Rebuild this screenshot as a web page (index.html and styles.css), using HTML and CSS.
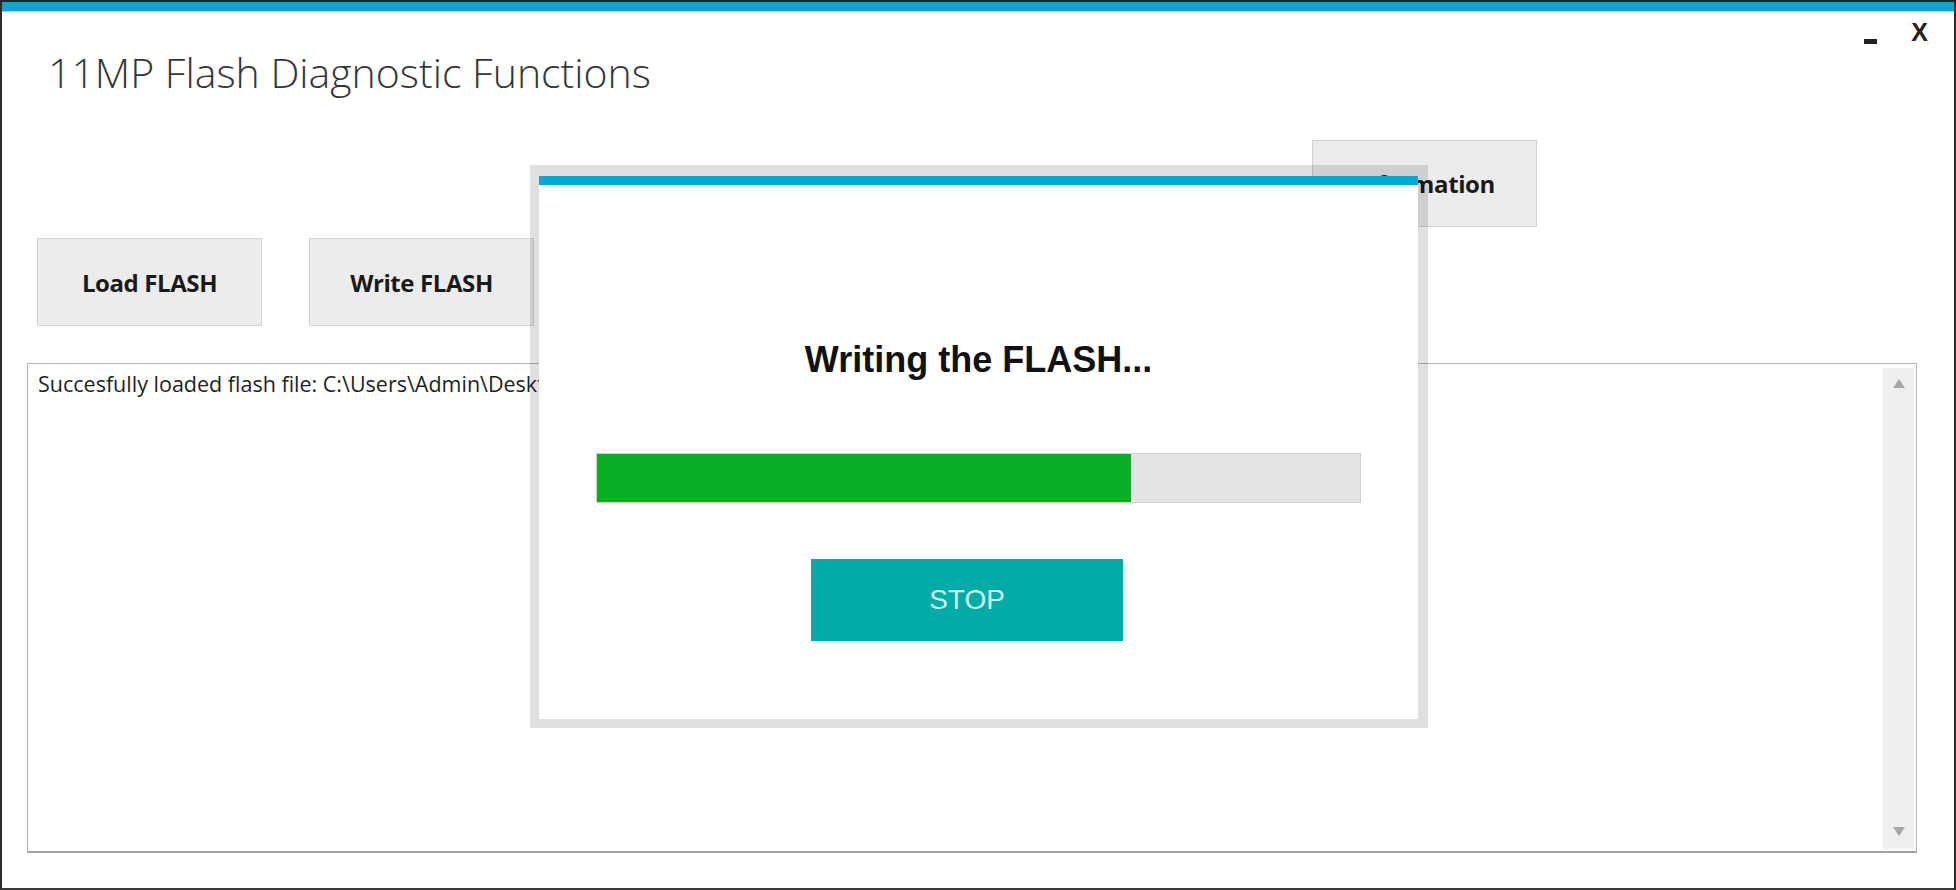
FILE: index.html
```html
<!DOCTYPE html>
<html lang="en">
<head>
    <meta charset="UTF-8">
    <meta name="viewport" content="width=device-width, initial-scale=1.0">
    <title>11MP Flash Diagnostic Functions</title>
    <link rel="stylesheet" href="styles.css">
</head>
<body>
    <div class="window">
        <div class="title-strip"></div>

        <header class="head">
            <h1 class="app-title">11MP Flash Diagnostic Functions</h1>
            <div class="window-controls">
                <span class="ctrl-min" title="Minimize"></span>
                <span class="ctrl-close" title="Close">X</span>
            </div>
        </header>

        <div class="toolbar toolbar-top">
            <button class="btn btn-info">Information</button>
        </div>

        <div class="toolbar">
            <button class="btn">Load FLASH</button>
            <button class="btn">Write FLASH</button>
        </div>

        <div class="log">
            <div class="log-text">Succesfully loaded flash file: C:\Users\Admin\Desktop\11MP_flash.bin</div>
            <div class="scrollbar">
                <span class="arrow-up"></span>
                <span class="arrow-down"></span>
            </div>
        </div>

        <!-- progress dialog sits over the main window -->
        <div class="dialog">
            <div class="dialog-body">
                <div class="dialog-title">Writing the FLASH...</div>
                <div class="progress">
                    <div class="progress-fill" style="width: 70%;"></div>
                </div>
                <button class="btn-stop">STOP</button>
            </div>
        </div>
    </div>
</body>
</html>
```

FILE: styles.css
```css
html, body {
    margin: 0;
    padding: 0;
    background-color: #1b2733;
}

body {
    font-family: "Open Sans", "Noto Sans", sans-serif;
    color: #1a1a1a;
}

.window {
    position: relative;
    width: 1956px;
    height: 890px;
    box-sizing: border-box;
    background-color: #ffffff;
    border-left: 2px solid #2a2a2a;
    border-right: 2px solid #2a2a2a;
    border-bottom: 2px solid #3a3a3a;
    border-top: 2px solid #1b2733;
    display: flex;
    flex-direction: column;
    overflow: hidden;
}

.title-strip {
    height: 9px;
    background-color: #0aa7d1;
    border-bottom: 1px solid #9fdcef;
}

.head {
    display: flex;
    justify-content: space-between;
    align-items: flex-start;
}

.app-title {
    margin: 40px 0 0 46px;
    font-size: 41px;
    font-weight: 300;
    line-height: 40px;
    color: #363636;
}

.window-controls {
    display: flex;
    align-items: flex-end;
    gap: 34px;
    margin: 8px 26px 0 0;
    font-family: "Liberation Sans", Arial, sans-serif;
}

.ctrl-min {
    width: 13px;
    height: 5px;
    margin-bottom: 1px;
    background-color: #222222;
}

.ctrl-close {
    font-size: 25px;
    font-weight: bold;
    line-height: 25px;
    color: #222222;
}

.toolbar {
    display: flex;
    gap: 47px;
    margin: 11px 0 0 35px;
}

.toolbar-top {
    margin: 48px 0 0 1310px;
}

.btn {
    width: 225px;
    height: 88px;
    box-sizing: border-box;
    background-color: #ececec;
    border: 1px solid #d3d3d3;
    font-family: "Open Sans", "Noto Sans", sans-serif;
    font-size: 24px;
    font-weight: bold;
    letter-spacing: -0.4px;
    color: #1a1a1a;
    padding: 0;
}

.btn-info {
    height: 87px;
}

.log {
    display: flex;
    width: 1890px;
    height: 490px;
    box-sizing: border-box;
    margin: 37px 0 0 25px;
    border: 1px solid #b6b6b6;
    border-bottom: 2px solid #a3a3a3;
}

.log-text {
    flex: 1;
    padding: 6px 0 0 10px;
    font-size: 21.5px;
    line-height: 28px;
    color: #1f1f1f;
    white-space: nowrap;
}

.scrollbar {
    width: 31px;
    margin: 4px 2px 2px 0;
    background-color: #efefef;
    display: flex;
    flex-direction: column;
    justify-content: space-between;
    align-items: center;
    padding: 11px 0 13px;
}

.arrow-up {
    width: 0;
    height: 0;
    border-left: 6px solid transparent;
    border-right: 6px solid transparent;
    border-bottom: 9px solid #a6a6a6;
}

.arrow-down {
    width: 0;
    height: 0;
    border-left: 6px solid transparent;
    border-right: 6px solid transparent;
    border-top: 9px solid #a6a6a6;
}

.dialog {
    position: absolute;
    left: 528px;
    top: 163px;
    width: 898px;
    height: 563px;
    box-sizing: border-box;
    padding: 11px 10px 9px 9px;
    background-color: rgba(0, 0, 0, 0.12);
}

.dialog-body {
    height: 100%;
    box-sizing: border-box;
    background-color: #ffffff;
    border-top: 9px solid #02a9d5;
    display: flex;
    flex-direction: column;
}

.dialog-title {
    margin-top: 157px;
    text-align: center;
    font-family: "Liberation Sans", Arial, sans-serif;
    font-size: 36px;
    font-weight: bold;
    line-height: 36px;
    color: #111111;
}

.progress {
    width: 765px;
    height: 50px;
    box-sizing: border-box;
    margin: 75px 0 0 57px;
    background-color: #e4e4e4;
    border: 1px solid #d0d0d0;
}

.progress-fill {
    height: 100%;
    background-color: #09ad24;
}

.btn-stop {
    width: 312px;
    height: 82px;
    margin: 56px 0 0 272px;
    border: none;
    background-color: #02aca6;
    font-family: "Liberation Sans", Arial, sans-serif;
    font-size: 28px;
    color: #cdf6f0;
    padding: 0;
}
```
